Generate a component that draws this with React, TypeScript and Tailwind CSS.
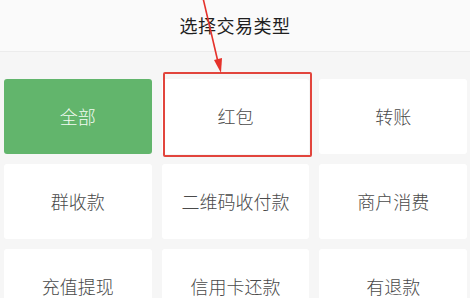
import React from 'react';

const types = ['全部', '红包', '转账', '群收款', '二维码收付款', '商户消费', '充值提现', '信用卡还款', '有退款'];

const App: React.FC = () => {
  return (
    <div
      className="relative w-[470px] h-[298px] overflow-hidden bg-[#f6f6f6]"
      style={{ fontFamily: '"Noto Sans CJK SC", "Noto Sans", sans-serif' }}
    >
      <div className="h-[52px] flex items-center justify-center bg-[#fafafa] border-b border-[#ececec]">
        <h1 className="text-[18px] text-[#1f1f1f] tracking-[0.5px]">选择交易类型</h1>
      </div>

      <div className="grid grid-cols-3 gap-x-[10px] gap-y-[10px] pl-[4px] pr-[3px] pt-[27px]">
        {types.map((t, i) => (
          <div
            key={t}
            className={
              i === 0
                ? 'relative h-[75px] flex items-center justify-center rounded-[3px] bg-[#62b56c] text-[18px] font-light text-[#f2fbf2]'
                : 'relative h-[75px] flex items-center justify-center rounded-[3px] bg-white text-[18px] font-light text-[#4a4a4a]'
            }
          >
            {t}
            {i === 1 && (
              <div className="absolute -top-[7px] -bottom-[3px] left-[1px] -right-[3px] border-2 border-[#e2453d] rounded-[2px]" />
            )}
          </div>
        ))}
      </div>

      {/* annotation arrow */}
      <svg className="absolute left-0 top-0" width="470" height="298" viewBox="0 0 470 298">
        <line x1="203" y1="-2" x2="218" y2="62" stroke="#e5322b" strokeWidth="1.6" />
        <polygon points="221,73 214,60 222,58" fill="#e5322b" />
      </svg>
    </div>
  );
};

export default App;
